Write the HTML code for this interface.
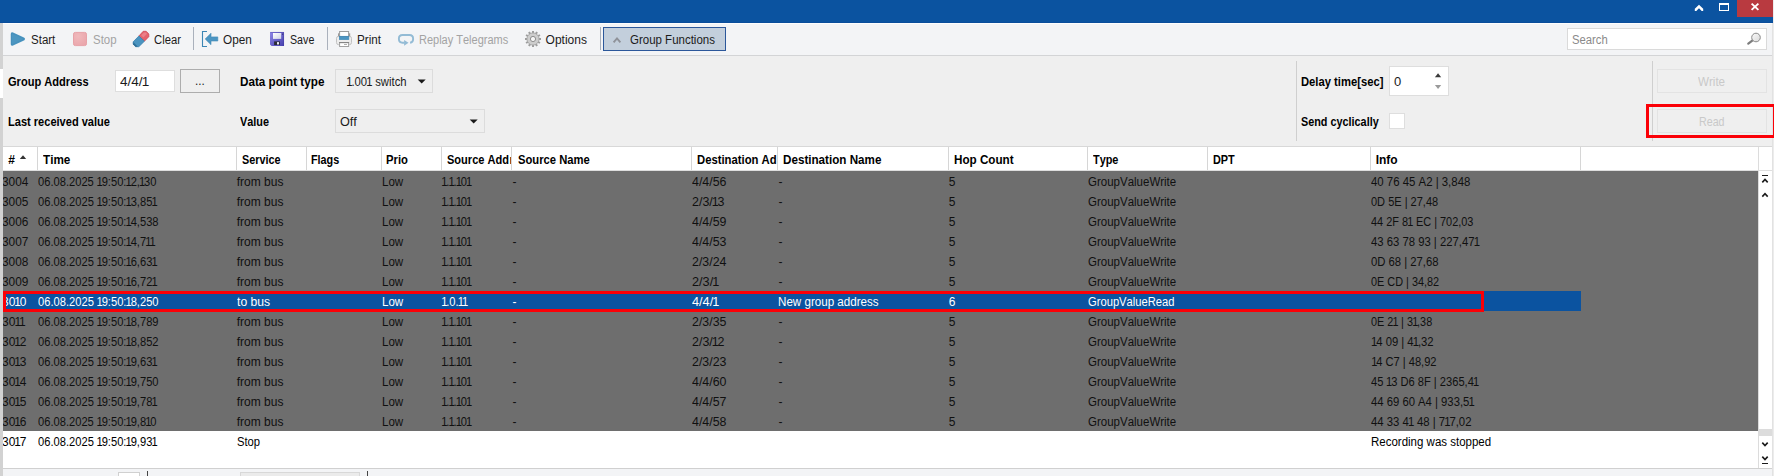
<!DOCTYPE html>
<html><head><meta charset="utf-8"><title>Group Monitor</title>
<style>
html,body{margin:0;padding:0}
body{width:1774px;height:476px;overflow:hidden;position:relative;background:#fff;font-family:"Liberation Sans",sans-serif;font-size:12px;color:#1b1b1b;font-kerning:none}
.a{position:absolute}
.t{position:absolute;white-space:nowrap;line-height:1;transform-origin:0 0}
.t i{font-style:normal;margin:0 -1.25px 0 -0.95px}
svg{position:absolute;overflow:visible}
.sep{position:absolute;width:1px;background:#aab1bc;top:27px;height:23px}
.hs{position:absolute;width:1px;background:#d6d6d6;top:147px;height:23px}
</style></head><body>
<!-- title bar -->
<div class="a" style="left:0;top:0;width:1773px;height:23px;background:#0b53a0"></div>
<div class="a" style="left:0;top:22px;width:1773px;height:1px;background:#0a4d9b"></div>
<div class="a" style="left:1737px;top:0;width:36px;height:17px;background:#b93a40"></div>
<svg style="left:1690px;top:0" width="84" height="23" viewBox="1690 0 84 23">
 <path d="M1699 4.8 L1703.2 8.7 L1703.2 11.1 L1701.7 11.1 L1699 8.3 L1696.3 11.1 L1694.8 11.1 L1694.8 8.7 Z" fill="#fff"/>
 <rect x="1719.5" y="4" width="9" height="6.5" fill="none" stroke="#fff" stroke-width="1"/>
 <rect x="1719" y="3" width="10" height="2" fill="#fff"/>
 <path d="M1751.6 3.6 L1758.4 9.9 M1758.4 3.6 L1751.6 9.9" fill="none" stroke="#fff" stroke-width="1.9"/>
</svg>
<!-- window edges -->
<div class="a" style="left:1773px;top:0;width:1px;height:476px;background:#ececec"></div>
<div class="a" style="left:1772px;top:23px;width:1px;height:453px;background:#e2e2e2"></div>
<!-- toolbar -->
<div class="a" style="left:3px;top:23px;width:1769px;height:32px;background:#f3f4f6;border-top:1px solid #fdfdfd;box-sizing:border-box"></div>
<div class="a" style="left:3px;top:55px;width:1769px;height:1px;background:#d3d4d6"></div>
<svg style="left:0;top:23px" width="760" height="32" viewBox="0 23 760 32">
 <defs>
  <linearGradient id="gp" x1="0" y1="0" x2="1" y2="1"><stop offset="0" stop-color="#8e87e6"/><stop offset="1" stop-color="#453fae"/></linearGradient>
  <linearGradient id="gl" x1="0" y1="0" x2="1" y2="1"><stop offset="0" stop-color="#ffffff"/><stop offset="1" stop-color="#cfd3e6"/></linearGradient>
  <radialGradient id="gs" cx="0.35" cy="0.3" r="0.8"><stop offset="0" stop-color="#f0b9bc"/><stop offset="1" stop-color="#eaa5ab"/></radialGradient>
 </defs>
 <!-- play -->
 <path d="M12.4 33.9 L23.3 39 L12.4 44.1 Z" fill="#4c96c1" stroke="#4c96c1" stroke-width="3.2" stroke-linejoin="round"/><path d="M11.4 32.9 L24.4 39 L11.4 45.1 Z" fill="none" stroke="#3f88b6" stroke-width="0.7" stroke-linejoin="round" opacity="0.7"/>
 <!-- stop -->
 <rect x="73.5" y="32.4" width="13" height="13.2" rx="1.8" fill="url(#gs)" stroke="#e7a2a8" stroke-width="1"/>
 <!-- eraser -->
 <path d="M138.9 36 L143.2 31.3 L146.2 31.3 L148.8 34 L148.8 36.7 L144.4 41.2 Z" fill="#e4646d" stroke="#cf4753" stroke-width="0.8" stroke-linejoin="round"/>
 <path d="M141.2 35.2 L144 32.4 L146 32.6 L147 33.8 L143.4 37.4 Z" fill="#ee8a91" opacity="0.75"/>
 <path d="M138.9 36 L144.4 41.2 L138.8 46.7 L135.6 46.7 L133.2 44.2 L133.2 41.8 Z" fill="#4a94c0" stroke="#3b82ae" stroke-width="0.8" stroke-linejoin="round"/>
 <path d="M133.2 41.9 L137.9 46.7 L135.6 46.7 L133.2 44.2 Z" fill="#2f7098"/>
 <!-- open -->
 <path d="M207 31.5 H202.5 V46.5 H207" fill="none" stroke="#3c86b4" stroke-width="1.1"/>
 <path d="M205.2 39 L211 33.2 L211 36.9 L217.8 36.9 L217.8 41 L211 41 L211 44.7 Z" fill="#4b95c2" stroke="#3f89b7" stroke-width="0.6" stroke-linejoin="round"/>
 <!-- save -->
 <path d="M270 32 H284 V46 H271.6 L270 44.6 Z" fill="url(#gp)"/>
 <path d="M270.4 32.4 H283.6 V45.6" fill="none" stroke="#3a3596" stroke-width="0.6" opacity="0.6"/>
 <rect x="273" y="33" width="8.2" height="5.9" fill="url(#gl)"/>
 <rect x="274.1" y="41.4" width="5.8" height="3.6" fill="#2b2b36"/>
 <rect x="277" y="42.1" width="2" height="2.4" fill="#e6e6f2"/>
 <rect x="282.2" y="33.6" width="1" height="1.2" fill="#2d2a70"/>
 <!-- print -->
 <rect x="336.5" y="36.3" width="15" height="8.3" rx="2" fill="#ededed" stroke="#c2c2c2" stroke-width="1"/>
 <rect x="338" y="33.3" width="1.2" height="3" fill="#9a9a9a"/><rect x="349" y="33.3" width="1.2" height="3" fill="#9a9a9a"/>
 <rect x="339.6" y="31.5" width="9" height="5" fill="#fff" stroke="#9c9c9c" stroke-width="1"/>
 <rect x="339.4" y="36.3" width="9.4" height="3.2" fill="#4b95c2" stroke="#3f89b7" stroke-width="0.7"/>
 <rect x="339.6" y="42.6" width="9" height="3.9" fill="#fff" stroke="#a2a2a2" stroke-width="1"/>
 <rect x="339.1" y="42" width="10" height="1.1" fill="#858585"/>
 <rect x="344" y="44" width="3" height="0.9" fill="#a8a8a8"/>
 <!-- replay -->
 <path d="M410.1 42.7 Q413.1 42.3 413.1 39.2 L413.1 38.6 Q413.1 35 409.5 35 L402.5 35 Q398.9 35 398.9 38.6 L398.9 39 Q398.9 42.7 402.5 42.7 L404.6 42.7" fill="none" stroke="#93bbd5" stroke-width="1.9"/>
 <path d="M404.1 39.9 L408.5 42.8 L404.1 45.8 Z" fill="#93bbd5"/>
 <!-- gear -->
 <g transform="translate(533 39)">
  <g fill="#9d9d9d">
   <rect x="-1" y="-8" width="2" height="3"/><rect x="-1" y="-8" width="2" height="3" transform="rotate(30)"/>
   <rect x="-1" y="-8" width="2" height="3" transform="rotate(60)"/><rect x="-1" y="-8" width="2" height="3" transform="rotate(90)"/>
   <rect x="-1" y="-8" width="2" height="3" transform="rotate(120)"/><rect x="-1" y="-8" width="2" height="3" transform="rotate(150)"/>
   <rect x="-1" y="-8" width="2" height="3" transform="rotate(180)"/><rect x="-1" y="-8" width="2" height="3" transform="rotate(210)"/>
   <rect x="-1" y="-8" width="2" height="3" transform="rotate(240)"/><rect x="-1" y="-8" width="2" height="3" transform="rotate(270)"/>
   <rect x="-1" y="-8" width="2" height="3" transform="rotate(300)"/><rect x="-1" y="-8" width="2" height="3" transform="rotate(330)"/>
  </g>
  <circle r="6.1" fill="#cdcdcd" stroke="#a6a6a6" stroke-width="0.9"/>
  <circle r="2.6" fill="#f6f6f6" stroke="#8e8e8e" stroke-width="1"/>
 </g>
</svg>

<div class="sep" style="left:193px"></div>
<div class="sep" style="left:327px"></div>
<div class="sep" style="left:600px"></div>
<div class="a" style="left:603px;top:27px;width:123px;height:24px;box-sizing:border-box;border:1px solid #2b579a;background:#c3cfdc"></div>
<svg style="left:610px;top:34px" width="14" height="12" viewBox="610 34 14 12"><path d="M613.6 42.4 L617 38.4 L620.4 42.4" fill="none" stroke="#8f9299" stroke-width="1.9"/></svg>
<!-- search -->
<div class="a" style="left:1567px;top:28px;width:200px;height:22px;box-sizing:border-box;border:1px solid #dadada;background:#fff"></div>
<svg style="left:1745px;top:31px" width="18" height="16" viewBox="1745 31 18 16">
 <defs><linearGradient id="mg" x1="0" y1="0" x2="1" y2="1"><stop offset="0" stop-color="#fafafa"/><stop offset="1" stop-color="#d9d9d9"/></linearGradient></defs>
 <path d="M1748.3 43.6 L1752.6 40.4" stroke="#7d7d7d" stroke-width="2.3" stroke-linecap="round" fill="none"/>
 <circle cx="1756" cy="37.5" r="4.3" fill="url(#mg)" stroke="#8a8a8a" stroke-width="1"/>
</svg>
<!-- panel -->
<div class="a" style="left:3px;top:56px;width:1769px;height:90px;background:#efefef"></div>
<div class="a" style="left:3px;top:146px;width:1769px;height:1px;background:#d8d8d8"></div>
<div class="a" style="left:115px;top:70px;width:60px;height:22px;box-sizing:border-box;border:1px solid #dedede;background:#fff"></div>
<div class="a" style="left:180px;top:69px;width:40px;height:24px;box-sizing:border-box;border:1px solid #adadad;background:#efefef"></div>
<div class="a" style="left:335px;top:69px;width:98px;height:24px;box-sizing:border-box;border:1px solid #dcdcdc;background:#efefef"></div>
<div class="a" style="left:335px;top:109px;width:150px;height:24px;box-sizing:border-box;border:1px solid #dcdcdc;background:#efefef"></div>
<svg style="left:417px;top:79px" width="10" height="6" viewBox="0 0 10 6"><path d="M0.7 0.4 L8.7 0.4 L4.7 4.6 Z" fill="#1a1a1a"/></svg>
<svg style="left:469px;top:119px" width="10" height="6" viewBox="0 0 10 6"><path d="M0.7 0.4 L8.7 0.4 L4.7 4.6 Z" fill="#1a1a1a"/></svg>
<div class="a" style="left:1296px;top:61px;width:1px;height:80px;background:#cfcfcf"></div>
<div class="a" style="left:1652px;top:61px;width:1px;height:80px;background:#cfcfcf"></div>
<div class="a" style="left:1389px;top:66px;width:60px;height:30px;box-sizing:border-box;border:1px solid #dedede;background:#fff"></div>
<svg style="left:1432px;top:70px" width="12" height="22" viewBox="0 0 12 22"><path d="M2.9 7.2 L9.2 7.2 L6.05 3.2 Z" fill="#3a3a3a"/><path d="M2.9 14.9 L9.2 14.9 L6.05 18.9 Z" fill="#9a9a9a"/></svg>
<div class="a" style="left:1389px;top:113px;width:16px;height:16px;box-sizing:border-box;border:1px solid #dedede;background:#fff"></div>
<div class="a" style="left:1657px;top:69px;width:110px;height:24px;box-sizing:border-box;border:1px solid #e3e3e3;background:#efefef"></div>
<div class="a" style="left:1657px;top:109px;width:110px;height:24px;box-sizing:border-box;border:1px solid #e3e3e3;background:#efefef"></div>
<!-- grid header -->
<div class="a" style="left:3px;top:147px;width:1769px;height:23px;background:#fff"></div>
<div class="a" style="left:3px;top:170px;width:1769px;height:1px;background:#dedede"></div>
<div class="hs" style="left:37px"></div><div class="hs" style="left:236px"></div><div class="hs" style="left:306px"></div>
<div class="hs" style="left:381px"></div><div class="hs" style="left:441px"></div><div class="hs" style="left:511px"></div>
<div class="hs" style="left:691px"></div><div class="hs" style="left:777px"></div><div class="hs" style="left:948px"></div>
<div class="hs" style="left:1087px"></div><div class="hs" style="left:1207px"></div><div class="hs" style="left:1370px"></div>
<div class="hs" style="left:1580px"></div>
<svg style="left:19px;top:154px" width="8" height="6" viewBox="0 0 8 6"><path d="M0.8 5 L7.2 5 L4 1.2 Z" fill="#333"/></svg>
<!-- grid rows -->
<div class="a" style="left:3px;top:171px;width:1755px;height:260px;background:#6e6e6e"></div>
<div class="a" style="left:3px;top:291px;width:1578px;height:20px;background:#0b53a0"></div>
<!-- scrollbar -->
<div class="a" style="left:1758px;top:147px;width:1px;height:321px;background:#dcdcdc"></div>
<div class="a" style="left:1759px;top:429px;width:13px;height:7px;background:#dcdcdc"></div>
<svg style="left:1759px;top:171px" width="13" height="297" viewBox="1759 171 13 297">
 <g fill="none" stroke="#1a1a1a" stroke-width="1.6">
 <path d="M1762 175.5 H1768" stroke-width="1"/>
 <path d="M1762.3 182.4 L1765 179.5 L1767.7 182.4"/>
 <path d="M1762.3 196.6 L1765 193.7 L1767.7 196.6"/>
 <path d="M1762.3 442.6 L1765 445.5 L1767.7 442.6"/>
 <path d="M1762.3 456.6 L1765 459.5 L1767.7 456.6"/>
 <path d="M1762 463.5 H1768" stroke-width="1"/>
 </g>
</svg>
<!-- bottom bar -->
<div class="a" style="left:3px;top:468px;width:1769px;height:1px;background:#d0d0d0"></div>
<div class="a" style="left:3px;top:469px;width:1769px;height:7px;background:#f3f4f6"></div>
<div class="a" style="left:118px;top:472px;width:22px;height:6px;box-sizing:border-box;border:1px solid #d0d0d0;background:#fff"></div>
<div class="a" style="left:147px;top:471px;width:1px;height:5px;background:#444"></div>
<div class="a" style="left:240px;top:472px;width:120px;height:6px;box-sizing:border-box;border:1px solid #d8d8d8;background:#ebebeb"></div>
<div class="a" style="left:367px;top:471px;width:1px;height:5px;background:#444"></div>
<span class="t" style="left:30.76px;top:33.84px;font-size:12px;color:#1b1b1b;transform:scaleX(0.9596);">Start</span>
<span class="t" style="left:92.56px;top:33.84px;font-size:12px;color:#a3a3a3;transform:scaleX(0.9527);">Stop</span>
<span class="t" style="left:153.66px;top:33.84px;font-size:12px;color:#1b1b1b;transform:scaleX(0.9384);">Clear</span>
<span class="t" style="left:222.76px;top:33.84px;font-size:12px;color:#1b1b1b;transform:scaleX(0.9816);">Open</span>
<span class="t" style="left:289.56px;top:33.84px;font-size:12px;color:#1b1b1b;transform:scaleX(0.8889);">Save</span>
<span class="t" style="left:357.06px;top:33.84px;font-size:12px;color:#1b1b1b;transform:scaleX(0.9730);">Print</span>
<span class="t" style="left:418.96px;top:33.84px;font-size:12px;color:#a3a3a3;transform:scaleX(0.9163);">Replay Telegrams</span>
<span class="t" style="left:545.56px;top:33.84px;font-size:12px;color:#1b1b1b;">Options</span>
<span class="t" style="left:630.06px;top:33.84px;font-size:12px;color:#1b1b1b;transform:scaleX(0.9572);">Group Functions</span>
<span class="t" style="left:1571.56px;top:33.84px;font-size:12px;color:#8a8a8a;transform:scaleX(0.9392);">Search</span>
<span class="t" style="left:8.11px;top:75.20px;font-size:13px;color:#000;transform:scaleX(0.8526);font-weight:700;">Group Address</span>
<span class="t" style="left:119.52px;top:75.20px;font-size:13px;color:#1b1b1b;transform:scaleX(1.0429);">4/4/<i>1</i></span>
<span class="t" style="left:194.96px;top:75.04px;font-size:12px;color:#1b1b1b;transform:scaleX(0.9705);">...</span>
<span class="t" style="left:240.01px;top:75.20px;font-size:13px;color:#000;transform:scaleX(0.8986);font-weight:700;">Data point type</span>
<span class="t" style="left:347.01px;top:75.20px;font-size:13px;color:#1b1b1b;transform:scaleX(0.8678);"><i>1</i>.00<i style="margin-right:-.5px">1</i> switch</span>
<span class="t" style="left:8.21px;top:115.20px;font-size:13px;color:#000;transform:scaleX(0.8501);font-weight:700;">Last received value</span>
<span class="t" style="left:240.01px;top:115.20px;font-size:13px;color:#000;transform:scaleX(0.8355);font-weight:700;">Value</span>
<span class="t" style="left:339.62px;top:115.20px;font-size:13px;color:#1b1b1b;transform:scaleX(0.9733);">Off</span>
<span class="t" style="left:1300.82px;top:75.20px;font-size:13px;color:#000;transform:scaleX(0.8647);font-weight:700;">Delay time[sec]</span>
<span class="t" style="left:1393.88px;top:75.20px;font-size:13px;color:#1b1b1b;">0</span>
<span class="t" style="left:1300.82px;top:115.20px;font-size:13px;color:#000;transform:scaleX(0.8332);font-weight:700;">Send cyclically</span>
<span class="t" style="left:1698.01px;top:75.20px;font-size:13px;color:#c9c9c9;transform:scaleX(0.8924);">Write</span>
<span class="t" style="left:1698.82px;top:115.20px;font-size:13px;color:#c9c9c9;transform:scaleX(0.8199);">Read</span>
<span class="t" style="left:8.26px;top:154.24px;font-size:12px;color:#000;font-weight:700;">#</span>
<span class="t" style="left:42.56px;top:154.24px;font-size:12px;color:#000;transform:scaleX(0.9752);font-weight:700;">Time</span>
<span class="t" style="left:242.16px;top:154.24px;font-size:12px;color:#000;transform:scaleX(0.9020);font-weight:700;">Service</span>
<span class="t" style="left:311.46px;top:154.24px;font-size:12px;color:#000;transform:scaleX(0.9003);font-weight:700;">Flags</span>
<span class="t" style="left:386.46px;top:154.24px;font-size:12px;color:#000;transform:scaleX(0.9390);font-weight:700;">Prio</span>
<span class="t" style="left:447.16px;top:154.24px;font-size:12px;color:#000;transform:scaleX(0.9209);font-weight:700;">Source Add</span>
<span class="t" style="left:517.56px;top:154.24px;font-size:12px;color:#000;transform:scaleX(0.9363);font-weight:700;">Source Name</span>
<span class="t" style="left:696.86px;top:154.24px;font-size:12px;color:#000;transform:scaleX(0.9403);font-weight:700;">Destination Ad</span>
<span class="t" style="left:782.76px;top:154.24px;font-size:12px;color:#000;transform:scaleX(0.9710);font-weight:700;">Destination Name</span>
<span class="t" style="left:953.86px;top:154.24px;font-size:12px;color:#000;transform:scaleX(0.9724);font-weight:700;">Hop Count</span>
<span class="t" style="left:1092.86px;top:154.24px;font-size:12px;color:#000;transform:scaleX(0.9074);font-weight:700;">Type</span>
<span class="t" style="left:1212.66px;top:154.24px;font-size:12px;color:#000;transform:scaleX(0.9050);font-weight:700;">DPT</span>
<span class="t" style="left:1375.66px;top:154.24px;font-size:12px;color:#000;font-weight:700;">Info</span>
<span class="t" style="left:2.06px;top:175.84px;font-size:12px;color:#101010;transform:scaleX(0.9885);">3004</span>
<span class="t" style="left:37.66px;top:175.84px;font-size:12px;color:#101010;transform:scaleX(0.9295);">06.08.2025 <i style="margin-left:-.4px">1</i>9:50:<i>1</i>2,<i>1</i>30</span>
<span class="t" style="left:236.76px;top:175.84px;font-size:12px;color:#101010;">from bus</span>
<span class="t" style="left:381.66px;top:175.84px;font-size:12px;color:#101010;transform:scaleX(0.9639);">Low</span>
<span class="t" style="left:442.16px;top:175.84px;font-size:12px;color:#101010;transform:scaleX(0.9281);"><i>1</i>.<i>1</i>.<i>1</i>0<i>1</i></span>
<span class="t" style="left:512.50px;top:175.84px;font-size:12px;color:#101010;">-</span>
<span class="t" style="left:691.66px;top:175.84px;font-size:12px;color:#101010;transform:scaleX(1.0318);">4/4/56</span>
<span class="t" style="left:778.50px;top:175.84px;font-size:12px;color:#101010;">-</span>
<span class="t" style="left:948.64px;top:175.84px;font-size:12px;color:#101010;">5</span>
<span class="t" style="left:1087.66px;top:175.84px;font-size:12px;color:#101010;transform:scaleX(0.9584);">GroupValueWrite</span>
<span class="t" style="left:1370.76px;top:175.84px;font-size:12px;color:#101010;transform:scaleX(0.9500);">40 76 45 A2 | 3,848</span>
<span class="t" style="left:2.06px;top:195.84px;font-size:12px;color:#101010;transform:scaleX(0.9885);">3005</span>
<span class="t" style="left:37.66px;top:195.84px;font-size:12px;color:#101010;transform:scaleX(0.9296);">06.08.2025 <i style="margin-left:-.4px">1</i>9:50:<i>1</i>3,85<i>1</i></span>
<span class="t" style="left:236.76px;top:195.84px;font-size:12px;color:#101010;">from bus</span>
<span class="t" style="left:381.66px;top:195.84px;font-size:12px;color:#101010;transform:scaleX(0.9639);">Low</span>
<span class="t" style="left:442.16px;top:195.84px;font-size:12px;color:#101010;transform:scaleX(0.9281);"><i>1</i>.<i>1</i>.<i>1</i>0<i>1</i></span>
<span class="t" style="left:512.50px;top:195.84px;font-size:12px;color:#101010;">-</span>
<span class="t" style="left:691.66px;top:195.84px;font-size:12px;color:#101010;transform:scaleX(1.0390);">2/3/<i>1</i>3</span>
<span class="t" style="left:778.50px;top:195.84px;font-size:12px;color:#101010;">-</span>
<span class="t" style="left:948.64px;top:195.84px;font-size:12px;color:#101010;">5</span>
<span class="t" style="left:1087.66px;top:195.84px;font-size:12px;color:#101010;transform:scaleX(0.9584);">GroupValueWrite</span>
<span class="t" style="left:1370.76px;top:195.84px;font-size:12px;color:#101010;transform:scaleX(0.9177);">0D 5E | 27,48</span>
<span class="t" style="left:2.06px;top:215.84px;font-size:12px;color:#101010;transform:scaleX(0.9885);">3006</span>
<span class="t" style="left:37.66px;top:215.84px;font-size:12px;color:#101010;transform:scaleX(0.9296);">06.08.2025 <i style="margin-left:-.4px">1</i>9:50:<i>1</i>4,538</span>
<span class="t" style="left:236.76px;top:215.84px;font-size:12px;color:#101010;">from bus</span>
<span class="t" style="left:381.66px;top:215.84px;font-size:12px;color:#101010;transform:scaleX(0.9639);">Low</span>
<span class="t" style="left:442.16px;top:215.84px;font-size:12px;color:#101010;transform:scaleX(0.9281);"><i>1</i>.<i>1</i>.<i>1</i>0<i>1</i></span>
<span class="t" style="left:512.50px;top:215.84px;font-size:12px;color:#101010;">-</span>
<span class="t" style="left:691.66px;top:215.84px;font-size:12px;color:#101010;transform:scaleX(1.0318);">4/4/59</span>
<span class="t" style="left:778.50px;top:215.84px;font-size:12px;color:#101010;">-</span>
<span class="t" style="left:948.64px;top:215.84px;font-size:12px;color:#101010;">5</span>
<span class="t" style="left:1087.66px;top:215.84px;font-size:12px;color:#101010;transform:scaleX(0.9584);">GroupValueWrite</span>
<span class="t" style="left:1370.76px;top:215.84px;font-size:12px;color:#101010;transform:scaleX(0.9111);">44 2F 8<i style="margin-right:-.5px">1</i> EC | 702,03</span>
<span class="t" style="left:2.06px;top:235.84px;font-size:12px;color:#101010;transform:scaleX(0.9885);">3007</span>
<span class="t" style="left:37.66px;top:235.84px;font-size:12px;color:#101010;transform:scaleX(0.9296);">06.08.2025 <i style="margin-left:-.4px">1</i>9:50:<i>1</i>4,7<i>1</i><i>1</i></span>
<span class="t" style="left:236.76px;top:235.84px;font-size:12px;color:#101010;">from bus</span>
<span class="t" style="left:381.66px;top:235.84px;font-size:12px;color:#101010;transform:scaleX(0.9639);">Low</span>
<span class="t" style="left:442.16px;top:235.84px;font-size:12px;color:#101010;transform:scaleX(0.9281);"><i>1</i>.<i>1</i>.<i>1</i>0<i>1</i></span>
<span class="t" style="left:512.50px;top:235.84px;font-size:12px;color:#101010;">-</span>
<span class="t" style="left:691.66px;top:235.84px;font-size:12px;color:#101010;transform:scaleX(1.0318);">4/4/53</span>
<span class="t" style="left:778.50px;top:235.84px;font-size:12px;color:#101010;">-</span>
<span class="t" style="left:948.64px;top:235.84px;font-size:12px;color:#101010;">5</span>
<span class="t" style="left:1087.66px;top:235.84px;font-size:12px;color:#101010;transform:scaleX(0.9584);">GroupValueWrite</span>
<span class="t" style="left:1370.76px;top:235.84px;font-size:12px;color:#101010;transform:scaleX(0.9422);">43 63 78 93 | 227,47<i>1</i></span>
<span class="t" style="left:2.06px;top:255.84px;font-size:12px;color:#101010;transform:scaleX(0.9885);">3008</span>
<span class="t" style="left:37.66px;top:255.84px;font-size:12px;color:#101010;transform:scaleX(0.9296);">06.08.2025 <i style="margin-left:-.4px">1</i>9:50:<i>1</i>6,63<i>1</i></span>
<span class="t" style="left:236.76px;top:255.84px;font-size:12px;color:#101010;">from bus</span>
<span class="t" style="left:381.66px;top:255.84px;font-size:12px;color:#101010;transform:scaleX(0.9639);">Low</span>
<span class="t" style="left:442.16px;top:255.84px;font-size:12px;color:#101010;transform:scaleX(0.9281);"><i>1</i>.<i>1</i>.<i>1</i>0<i>1</i></span>
<span class="t" style="left:512.50px;top:255.84px;font-size:12px;color:#101010;">-</span>
<span class="t" style="left:691.66px;top:255.84px;font-size:12px;color:#101010;transform:scaleX(1.0318);">2/3/24</span>
<span class="t" style="left:778.50px;top:255.84px;font-size:12px;color:#101010;">-</span>
<span class="t" style="left:948.64px;top:255.84px;font-size:12px;color:#101010;">5</span>
<span class="t" style="left:1087.66px;top:255.84px;font-size:12px;color:#101010;transform:scaleX(0.9584);">GroupValueWrite</span>
<span class="t" style="left:1370.76px;top:255.84px;font-size:12px;color:#101010;transform:scaleX(0.9402);">0D 68 | 27,68</span>
<span class="t" style="left:2.06px;top:275.84px;font-size:12px;color:#101010;transform:scaleX(0.9885);">3009</span>
<span class="t" style="left:37.66px;top:275.84px;font-size:12px;color:#101010;transform:scaleX(0.9296);">06.08.2025 <i style="margin-left:-.4px">1</i>9:50:<i>1</i>6,72<i>1</i></span>
<span class="t" style="left:236.76px;top:275.84px;font-size:12px;color:#101010;">from bus</span>
<span class="t" style="left:381.66px;top:275.84px;font-size:12px;color:#101010;transform:scaleX(0.9639);">Low</span>
<span class="t" style="left:442.16px;top:275.84px;font-size:12px;color:#101010;transform:scaleX(0.9281);"><i>1</i>.<i>1</i>.<i>1</i>0<i>1</i></span>
<span class="t" style="left:512.50px;top:275.84px;font-size:12px;color:#101010;">-</span>
<span class="t" style="left:691.66px;top:275.84px;font-size:12px;color:#101010;transform:scaleX(1.0585);">2/3/<i>1</i></span>
<span class="t" style="left:778.50px;top:275.84px;font-size:12px;color:#101010;">-</span>
<span class="t" style="left:948.64px;top:275.84px;font-size:12px;color:#101010;">5</span>
<span class="t" style="left:1087.66px;top:275.84px;font-size:12px;color:#101010;transform:scaleX(0.9584);">GroupValueWrite</span>
<span class="t" style="left:1370.76px;top:275.84px;font-size:12px;color:#101010;transform:scaleX(0.9061);">0E CD | 34,82</span>
<span class="t" style="left:2.06px;top:295.84px;font-size:12px;color:#fff;transform:scaleX(0.9932);">30<i>1</i>0</span>
<span class="t" style="left:37.66px;top:295.84px;font-size:12px;color:#fff;transform:scaleX(0.9296);">06.08.2025 <i style="margin-left:-.4px">1</i>9:50:<i>1</i>8,250</span>
<span class="t" style="left:236.76px;top:295.84px;font-size:12px;color:#fff;transform:scaleX(1.0127);">to bus</span>
<span class="t" style="left:381.66px;top:295.84px;font-size:12px;color:#fff;transform:scaleX(0.9639);">Low</span>
<span class="t" style="left:442.16px;top:295.84px;font-size:12px;color:#fff;transform:scaleX(0.9321);"><i>1</i>.0.<i>1</i><i>1</i></span>
<span class="t" style="left:512.50px;top:295.84px;font-size:12px;color:#fff;">-</span>
<span class="t" style="left:691.66px;top:295.84px;font-size:12px;color:#fff;transform:scaleX(1.0585);">4/4/<i>1</i></span>
<span class="t" style="left:778.26px;top:295.84px;font-size:12px;color:#fff;transform:scaleX(0.9669);">New group address</span>
<span class="t" style="left:948.64px;top:295.84px;font-size:12px;color:#fff;">6</span>
<span class="t" style="left:1087.66px;top:295.84px;font-size:12px;color:#fff;transform:scaleX(0.9330);">GroupValueRead</span>
<span class="t" style="left:2.06px;top:315.84px;font-size:12px;color:#101010;">30<i>1</i><i>1</i></span>
<span class="t" style="left:37.66px;top:315.84px;font-size:12px;color:#101010;transform:scaleX(0.9296);">06.08.2025 <i style="margin-left:-.4px">1</i>9:50:<i>1</i>8,789</span>
<span class="t" style="left:236.76px;top:315.84px;font-size:12px;color:#101010;">from bus</span>
<span class="t" style="left:381.66px;top:315.84px;font-size:12px;color:#101010;transform:scaleX(0.9639);">Low</span>
<span class="t" style="left:442.16px;top:315.84px;font-size:12px;color:#101010;transform:scaleX(0.9281);"><i>1</i>.<i>1</i>.<i>1</i>0<i>1</i></span>
<span class="t" style="left:512.50px;top:315.84px;font-size:12px;color:#101010;">-</span>
<span class="t" style="left:691.66px;top:315.84px;font-size:12px;color:#101010;transform:scaleX(1.0318);">2/3/35</span>
<span class="t" style="left:778.50px;top:315.84px;font-size:12px;color:#101010;">-</span>
<span class="t" style="left:948.64px;top:315.84px;font-size:12px;color:#101010;">5</span>
<span class="t" style="left:1087.66px;top:315.84px;font-size:12px;color:#101010;transform:scaleX(0.9584);">GroupValueWrite</span>
<span class="t" style="left:1370.76px;top:315.84px;font-size:12px;color:#101010;transform:scaleX(0.9050);">0E 2<i style="margin-right:-.5px">1</i> | 3<i>1</i>,38</span>
<span class="t" style="left:2.06px;top:335.84px;font-size:12px;color:#101010;transform:scaleX(0.9932);">30<i>1</i>2</span>
<span class="t" style="left:37.66px;top:335.84px;font-size:12px;color:#101010;transform:scaleX(0.9296);">06.08.2025 <i style="margin-left:-.4px">1</i>9:50:<i>1</i>8,852</span>
<span class="t" style="left:236.76px;top:335.84px;font-size:12px;color:#101010;">from bus</span>
<span class="t" style="left:381.66px;top:335.84px;font-size:12px;color:#101010;transform:scaleX(0.9639);">Low</span>
<span class="t" style="left:442.16px;top:335.84px;font-size:12px;color:#101010;transform:scaleX(0.9281);"><i>1</i>.<i>1</i>.<i>1</i>0<i>1</i></span>
<span class="t" style="left:512.50px;top:335.84px;font-size:12px;color:#101010;">-</span>
<span class="t" style="left:691.66px;top:335.84px;font-size:12px;color:#101010;transform:scaleX(1.0390);">2/3/<i>1</i>2</span>
<span class="t" style="left:778.50px;top:335.84px;font-size:12px;color:#101010;">-</span>
<span class="t" style="left:948.64px;top:335.84px;font-size:12px;color:#101010;">5</span>
<span class="t" style="left:1087.66px;top:335.84px;font-size:12px;color:#101010;transform:scaleX(0.9584);">GroupValueWrite</span>
<span class="t" style="left:1371.66px;top:335.84px;font-size:12px;color:#101010;transform:scaleX(0.9398);"><i>1</i>4 09 | 4<i>1</i>,32</span>
<span class="t" style="left:2.06px;top:355.84px;font-size:12px;color:#101010;transform:scaleX(0.9932);">30<i>1</i>3</span>
<span class="t" style="left:37.66px;top:355.84px;font-size:12px;color:#101010;transform:scaleX(0.9296);">06.08.2025 <i style="margin-left:-.4px">1</i>9:50:<i>1</i>9,63<i>1</i></span>
<span class="t" style="left:236.76px;top:355.84px;font-size:12px;color:#101010;">from bus</span>
<span class="t" style="left:381.66px;top:355.84px;font-size:12px;color:#101010;transform:scaleX(0.9639);">Low</span>
<span class="t" style="left:442.16px;top:355.84px;font-size:12px;color:#101010;transform:scaleX(0.9281);"><i>1</i>.<i>1</i>.<i>1</i>0<i>1</i></span>
<span class="t" style="left:512.50px;top:355.84px;font-size:12px;color:#101010;">-</span>
<span class="t" style="left:691.66px;top:355.84px;font-size:12px;color:#101010;transform:scaleX(1.0318);">2/3/23</span>
<span class="t" style="left:778.50px;top:355.84px;font-size:12px;color:#101010;">-</span>
<span class="t" style="left:948.64px;top:355.84px;font-size:12px;color:#101010;">5</span>
<span class="t" style="left:1087.66px;top:355.84px;font-size:12px;color:#101010;transform:scaleX(0.9584);">GroupValueWrite</span>
<span class="t" style="left:1371.66px;top:355.84px;font-size:12px;color:#101010;transform:scaleX(0.9265);"><i>1</i>4 C7 | 48,92</span>
<span class="t" style="left:2.06px;top:375.84px;font-size:12px;color:#101010;transform:scaleX(0.9932);">30<i>1</i>4</span>
<span class="t" style="left:37.66px;top:375.84px;font-size:12px;color:#101010;transform:scaleX(0.9296);">06.08.2025 <i style="margin-left:-.4px">1</i>9:50:<i>1</i>9,750</span>
<span class="t" style="left:236.76px;top:375.84px;font-size:12px;color:#101010;">from bus</span>
<span class="t" style="left:381.66px;top:375.84px;font-size:12px;color:#101010;transform:scaleX(0.9639);">Low</span>
<span class="t" style="left:442.16px;top:375.84px;font-size:12px;color:#101010;transform:scaleX(0.9281);"><i>1</i>.<i>1</i>.<i>1</i>0<i>1</i></span>
<span class="t" style="left:512.50px;top:375.84px;font-size:12px;color:#101010;">-</span>
<span class="t" style="left:691.66px;top:375.84px;font-size:12px;color:#101010;transform:scaleX(1.0318);">4/4/60</span>
<span class="t" style="left:778.50px;top:375.84px;font-size:12px;color:#101010;">-</span>
<span class="t" style="left:948.64px;top:375.84px;font-size:12px;color:#101010;">5</span>
<span class="t" style="left:1087.66px;top:375.84px;font-size:12px;color:#101010;transform:scaleX(0.9584);">GroupValueWrite</span>
<span class="t" style="left:1370.76px;top:375.84px;font-size:12px;color:#101010;transform:scaleX(0.9278);">45 <i style="margin-left:-.4px">1</i>3 D6 8F | 2365,4<i>1</i></span>
<span class="t" style="left:2.06px;top:395.84px;font-size:12px;color:#101010;transform:scaleX(0.9932);">30<i>1</i>5</span>
<span class="t" style="left:37.66px;top:395.84px;font-size:12px;color:#101010;transform:scaleX(0.9296);">06.08.2025 <i style="margin-left:-.4px">1</i>9:50:<i>1</i>9,78<i>1</i></span>
<span class="t" style="left:236.76px;top:395.84px;font-size:12px;color:#101010;">from bus</span>
<span class="t" style="left:381.66px;top:395.84px;font-size:12px;color:#101010;transform:scaleX(0.9639);">Low</span>
<span class="t" style="left:442.16px;top:395.84px;font-size:12px;color:#101010;transform:scaleX(0.9281);"><i>1</i>.<i>1</i>.<i>1</i>0<i>1</i></span>
<span class="t" style="left:512.50px;top:395.84px;font-size:12px;color:#101010;">-</span>
<span class="t" style="left:691.66px;top:395.84px;font-size:12px;color:#101010;transform:scaleX(1.0318);">4/4/57</span>
<span class="t" style="left:778.50px;top:395.84px;font-size:12px;color:#101010;">-</span>
<span class="t" style="left:948.64px;top:395.84px;font-size:12px;color:#101010;">5</span>
<span class="t" style="left:1087.66px;top:395.84px;font-size:12px;color:#101010;transform:scaleX(0.9584);">GroupValueWrite</span>
<span class="t" style="left:1370.76px;top:395.84px;font-size:12px;color:#101010;transform:scaleX(0.9407);">44 69 60 A4 | 933,5<i>1</i></span>
<span class="t" style="left:2.06px;top:415.84px;font-size:12px;color:#101010;transform:scaleX(0.9932);">30<i>1</i>6</span>
<span class="t" style="left:37.66px;top:415.84px;font-size:12px;color:#101010;transform:scaleX(0.9295);">06.08.2025 <i style="margin-left:-.4px">1</i>9:50:<i>1</i>9,8<i>1</i>0</span>
<span class="t" style="left:236.76px;top:415.84px;font-size:12px;color:#101010;">from bus</span>
<span class="t" style="left:381.66px;top:415.84px;font-size:12px;color:#101010;transform:scaleX(0.9639);">Low</span>
<span class="t" style="left:442.16px;top:415.84px;font-size:12px;color:#101010;transform:scaleX(0.9281);"><i>1</i>.<i>1</i>.<i>1</i>0<i>1</i></span>
<span class="t" style="left:512.50px;top:415.84px;font-size:12px;color:#101010;">-</span>
<span class="t" style="left:691.66px;top:415.84px;font-size:12px;color:#101010;transform:scaleX(1.0318);">4/4/58</span>
<span class="t" style="left:778.50px;top:415.84px;font-size:12px;color:#101010;">-</span>
<span class="t" style="left:948.64px;top:415.84px;font-size:12px;color:#101010;">5</span>
<span class="t" style="left:1087.66px;top:415.84px;font-size:12px;color:#101010;transform:scaleX(0.9584);">GroupValueWrite</span>
<span class="t" style="left:1370.76px;top:415.84px;font-size:12px;color:#101010;transform:scaleX(0.9454);">44 33 4<i style="margin-right:-.5px">1</i> 48 | 7<i>1</i>7,02</span>
<span class="t" style="left:2.06px;top:435.84px;font-size:12px;color:#000;transform:scaleX(0.9932);">30<i>1</i>7</span>
<span class="t" style="left:37.66px;top:435.84px;font-size:12px;color:#000;transform:scaleX(0.9296);">06.08.2025 <i style="margin-left:-.4px">1</i>9:50:<i>1</i>9,93<i>1</i></span>
<span class="t" style="left:236.76px;top:435.84px;font-size:12px;color:#000;transform:scaleX(0.9365);">Stop</span>
<span class="t" style="left:1370.76px;top:435.84px;font-size:12px;color:#000;transform:scaleX(0.9577);">Recording was stopped</span>
<div class="a" style="left:509.2px;top:150px;width:1.5px;height:18px;overflow:hidden"><span class="t" style="left:0.2px;top:4.24px;font-size:12px;font-weight:700;color:#000">r</span></div>
<!-- annotation rectangles -->
<div class="a" style="left:3px;top:291px;width:1481px;height:21px;box-sizing:border-box;border:3px solid #fb0007"></div>
<div class="a" style="left:1646px;top:104px;width:130px;height:34px;box-sizing:border-box;border:3px solid #fb0007"></div>
<div class="a" style="left:0;top:23px;width:3px;height:453px;background:#d2d2d2"></div>
<div class="a" style="left:0;top:69px;width:3px;height:29px;background:#fff"></div>
</body></html>
